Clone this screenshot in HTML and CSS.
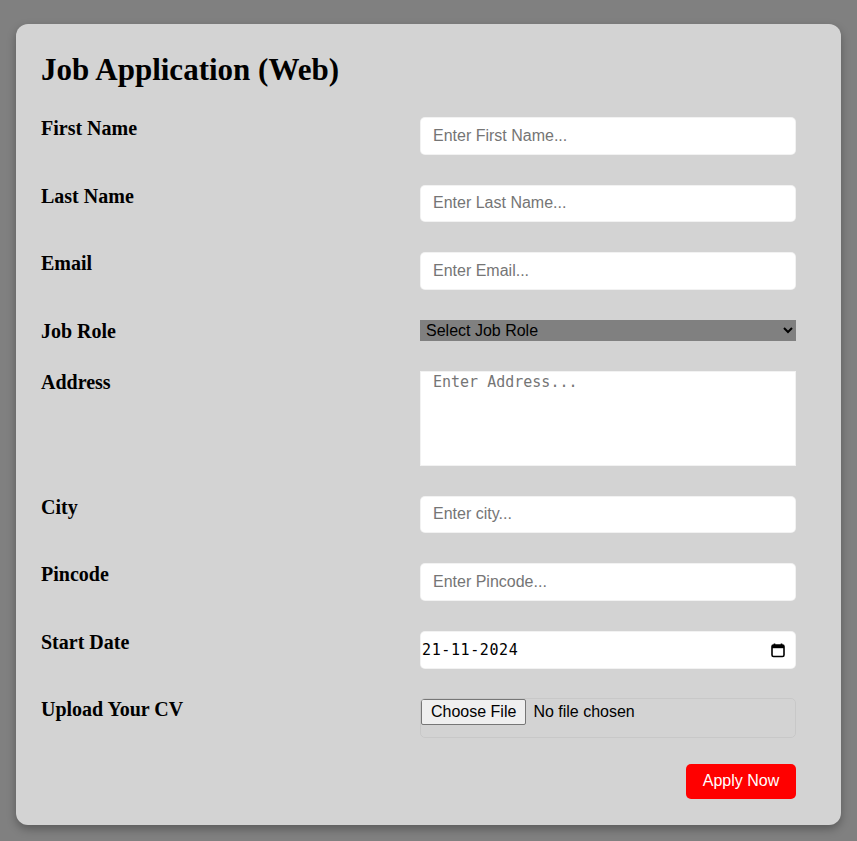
FILE: index.html
```html
<!DOCTYPE html>
<html lang="en">
<head>
<meta charset="utf-8">
<title>Job Application (Web)</title>
<link rel="stylesheet" href="styles.css">
</head>
<body>
<form class="card">
  <h1 class="title">Job Application (Web)</h1>
  <div class="row">
    <label class="label" for="fn">First Name</label>
    <input class="field" id="fn" type="text" placeholder="Enter First Name...">
  </div>
  <div class="row">
    <label class="label" for="ln">Last Name</label>
    <input class="field" id="ln" type="text" placeholder="Enter Last Name...">
  </div>
  <div class="row">
    <label class="label" for="em">Email</label>
    <input class="field" id="em" type="email" placeholder="Enter Email...">
  </div>
  <div class="row">
    <label class="label" for="jr">Job Role</label>
    <select class="select" id="jr">
      <option>Select Job Role</option>
    </select>
  </div>
  <div class="row">
    <label class="label" for="ad">Address</label>
    <textarea class="area" id="ad" placeholder="Enter Address..."></textarea>
  </div>
  <div class="row">
    <label class="label" for="ct">City</label>
    <input class="field" id="ct" type="text" placeholder="Enter city...">
  </div>
  <div class="row">
    <label class="label" for="pc">Pincode</label>
    <input class="field" id="pc" type="text" placeholder="Enter Pincode...">
  </div>
  <div class="row row-date">
    <label class="label" for="sd">Start Date</label>
    <div class="date" id="sd">
      <span class="date-text">21-11-2024</span>
      <svg class="cal" width="16" height="16" viewBox="0 0 16 16" aria-hidden="true">
        <path d="M4.5 1.5v2.5M11.5 1.5v2.5" stroke="#000" stroke-width="1.6" fill="none"/>
        <rect x="2" y="3" width="12" height="11.5" rx="1.5" fill="none" stroke="#000" stroke-width="1.6"/>
        <rect x="2" y="3" width="12" height="3.2" fill="#000"/>
      </svg>
    </div>
  </div>
  <div class="row">
    <label class="label" for="cv">Upload Your CV</label>
    <input class="file" id="cv" type="file">
  </div>
  <div class="actions">
    <button class="apply" type="button">Apply Now</button>
  </div>
</form>
</body>
</html>
```

FILE: styles.css
```css
html, body {
  margin: 0;
  padding: 0;
}
body {
  background: #808080;
  padding: 24px 16px 17px;
  font-family: "Liberation Serif", "Times New Roman", serif;
}
.card {
  background: #d3d3d3;
  border-radius: 12px;
  box-shadow: 0 4px 10px rgba(0, 0, 0, 0.3);
  padding: 25px 45px 26px 25px;
  display: flex;
  flex-direction: column;
}
.title {
  font-size: 31px;
  font-weight: bold;
  margin: 2px 0 29px;
  line-height: 37px;
}
.row {
  display: grid;
  grid-template-columns: 1fr 376px;
  align-items: start;
  margin-bottom: 30px;
}
.row-date {
  margin-bottom: 29px;
}
.label {
  font-size: 20px;
  font-weight: bold;
  line-height: 20px;
  padding-top: 1px;
  color: #000;
}
.field {
  box-sizing: border-box;
  height: 37.5px;
  width: 100%;
  border: 1px solid rgba(0, 0, 0, 0.05);
  border-radius: 5px;
  background: #fff;
  padding: 0 12px;
  margin: 0;
  font-family: "Liberation Sans", Arial, sans-serif;
  font-size: 16px;
  color: #000;
  outline: none;
}
.field::placeholder {
  color: #757575;
}
.select {
  box-sizing: border-box;
  width: 100%;
  height: 21px;
  background: #808080;
  border: none;
  border-radius: 0;
  font-family: "Liberation Sans", Arial, sans-serif;
  font-size: 16px;
  color: #000;
  padding: 0 4px 0 2px;
  margin: 0;
}
.area {
  box-sizing: border-box;
  width: 100%;
  height: 95px;
  border: 1px solid rgba(0, 0, 0, 0.05);
  border-radius: 0;
  background: #fff;
  padding: 1px 12px;
  font-family: "DejaVu Sans Mono", "Liberation Mono", monospace;
  font-size: 15px;
  resize: none;
  margin: 0;
  display: block;
}
.area::placeholder {
  color: #757575;
}
.date {
  box-sizing: border-box;
  height: 38px;
  border: 1px solid rgba(0, 0, 0, 0.05);
  border-radius: 5px;
  background: #fff;
  display: flex;
  align-items: center;
  justify-content: space-between;
  padding: 0 9px 0 1px;
}
.date-text {
  font-family: "DejaVu Sans Mono", "Liberation Mono", monospace;
  font-size: 15px;
  letter-spacing: 0.6px;
  color: #000;
}
.cal {
  display: block;
}
.file {
  box-sizing: border-box;
  width: 100%;
  height: 40px;
  border: 1px solid rgba(0, 0, 0, 0.05);
  border-radius: 5px;
  padding: 0;
  margin: 0;
  font-family: "Liberation Sans", Arial, sans-serif;
  font-size: 16px;
  line-height: 26px;
  color: #000;
}
.file::file-selector-button {
  font-family: "Liberation Sans", Arial, sans-serif;
  font-size: 16px;
  height: 26px;
  padding: 0 9px;
  margin: 0 7px 0 0;
  border: 1px solid #767676;
  border-radius: 2px;
  background: #efefef;
  color: #000;
}
.actions {
  display: flex;
  justify-content: flex-end;
  margin-top: -4px;
}
.apply {
  width: 110px;
  height: 35px;
  background: #ff0000;
  color: #fff;
  border: none;
  border-radius: 5px;
  font-family: "Liberation Sans", Arial, sans-serif;
  font-size: 16px;
  padding: 0;
}
```
